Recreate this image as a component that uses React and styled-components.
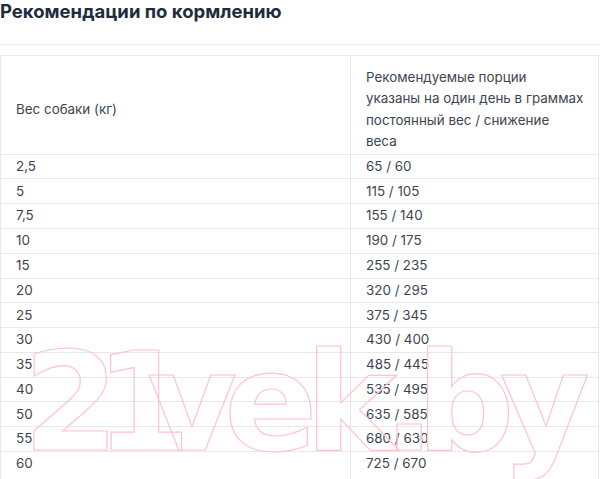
import styled, { createGlobalStyle } from 'styled-components'

const GlobalStyle = createGlobalStyle`
    body {
        margin: 0;
        background: #ffffff;
        font-family: Inter, "Noto Sans", sans-serif;
    }
`

const Page = styled.div`
    position: relative;
    width: 600px;
    height: 479px;
    overflow: hidden;
`

const Title = styled.h2`
    margin: 0;
    font-size: 18.5px;
    line-height: 22px;
    font-weight: 700;
    color: #1f2c3c;
`

const Divider = styled.div`
    margin-top: 22px;
    border-top: 1px solid #ececec;
`

const Table = styled.table`
    margin: 10px 0 0;
    width: 599px;
    table-layout: fixed;
    border-collapse: collapse;
    font-size: 13.4px;
    color: #3d4450;
`

const Cell = styled.td`
    border: 1px solid #e8e8e8;
    padding: ${ p => p.$last ? `1px 15px 10px` : `1.2px 15px` };
    line-height: 21.4px;
    vertical-align: ${ p => p.$last ? `top` : `middle` };
    white-space: nowrap;
`

const HeadCell = styled(Cell)`
    padding: 11px 15px 1px;
`

const Watermark = styled.svg`
    position: absolute;
    left: 0;
    top: 0;
    pointer-events: none;
`

const rows = [
    [ `2,5`, `65 / 60` ],
    [ `5`, `115 / 105` ],
    [ `7,5`, `155 / 140` ],
    [ `10`, `190 / 175` ],
    [ `15`, `255 / 235` ],
    [ `20`, `320 / 295` ],
    [ `25`, `375 / 345` ],
    [ `30`, `430 / 400` ],
    [ `35`, `485 / 445` ],
    [ `40`, `535 / 495` ],
    [ `50`, `635 / 585` ],
    [ `55`, `680 / 630` ],
    [ `60`, `725 / 670` ],
]

// pen positions of each watermark letter, so the outline lands where the logo sits
const mark = [
    [ `2`, 23 ],
    [ `1`, 95 ],
    [ `v`, 147 ],
    [ `e`, 224 ],
    [ `k`, 305 ],
    [ `.`, 383 ],
    [ `b`, 416 ],
    [ `y`, 500 ],
]

export default function App() {

    return <Page>
        <GlobalStyle />
        <Title>Рекомендации по кормлению</Title>
        <Divider />
        <Table>
            <colgroup>
                <col style={ { width: `350px` } } />
                <col />
            </colgroup>
            <tbody>
                <tr>
                    <HeadCell>Вес собаки (кг)</HeadCell>
                    <HeadCell>
                        Рекомендуемые порции<br />
                        указаны на один день в граммах<br />
                        постоянный вес / снижение<br />
                        веса
                    </HeadCell>
                </tr>
                { rows.map( ( [ weight, portion ], i ) => <tr key={ weight }>
                    <Cell $last={ i === rows.length - 1 }>{ weight }</Cell>
                    <Cell $last={ i === rows.length - 1 }>{ portion }</Cell>
                </tr> ) }
            </tbody>
        </Table>
        <Watermark width="600" height="479" viewBox="0 0 600 479" aria-hidden="true">
            <text
                y="450"
                fontFamily="'DejaVu Sans', sans-serif"
                fontWeight="700"
                fontSize="138"
                fill="none"
                stroke="#ffc4d2"
                strokeWidth="1.2"
            >
                { mark.map( ( [ ch, x ] ) => <tspan key={ ch } x={ x }>{ ch }</tspan> ) }
            </text>
        </Watermark>
    </Page>

}
